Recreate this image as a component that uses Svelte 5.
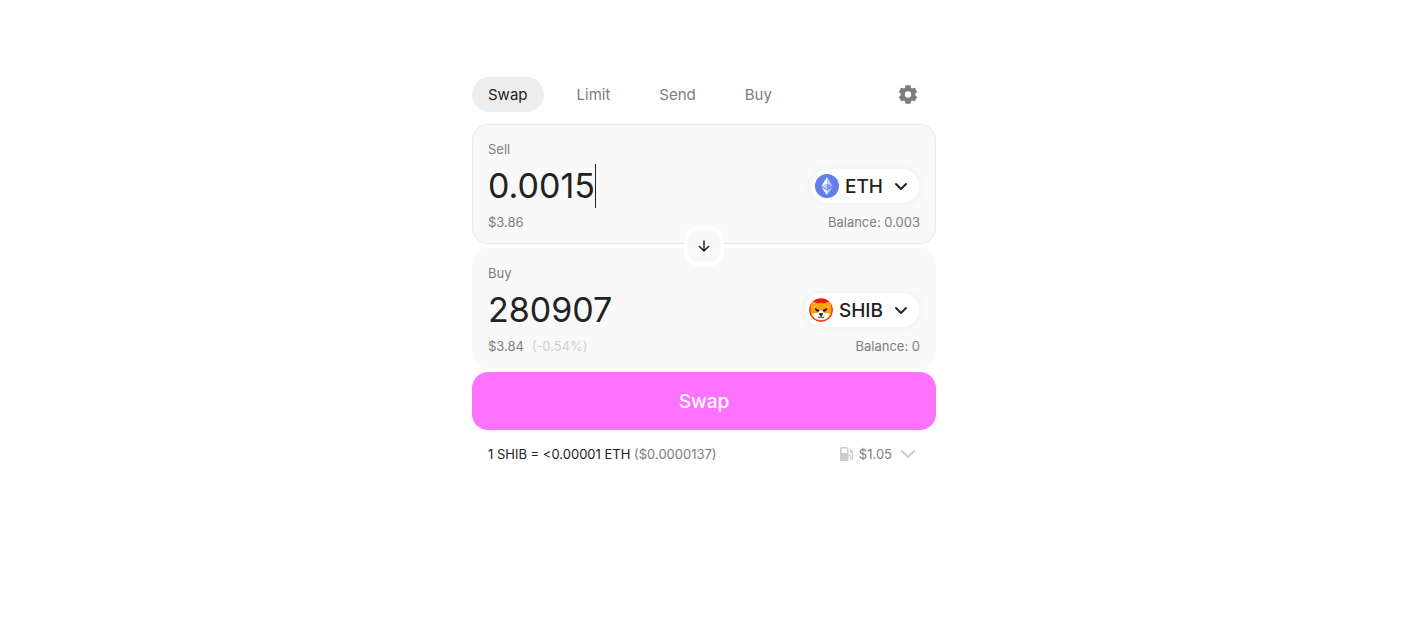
<script>
  const tabs = ['Swap', 'Limit', 'Send', 'Buy'];

  let active = 'Swap';
  let sell = '0.0015';
  let buy = '280907';
</script>

<main>
  <header>
    <nav>
      {#each tabs as tab}
        <button class="tab" class:active={tab === active} on:click={() => (active = tab)}>
          {tab}
        </button>
      {/each}
    </nav>
    <button class="settings" aria-label="Settings">
      <svg width="20" height="20" viewBox="0 0 20 20" fill="#7d7d7d">
        <path
          fill-rule="evenodd"
          d="M8 .3h4q.6 0 .7.600l.4 2q.5.200 1 .6l1.900-.7q.6-.2.900.3l2 3.400q.3.500-.2.900L17.200 8.700v1.600l1.500 1.300q.5.400.2.900l-2 3.400q-.3.500-.9.300l-1.900-.7q-.5.400-1 .6l-.4 2q-.1.600-.7.600H8q-.6 0-.7-.6l-.4-2q-.5-.2-1-.6l-1.900.7q-.6.200-.9-.3l-2-3.400q-.3-.5.200-.9l1.500-1.300V8.700L1.300 7.400q-.5-.4-.2-.9l2-3.400q.3-.5.9-.3l1.900.7q.5-.4 1-.6l.4-2q.1-.6.7-.6ZM10 6.300a3.200 3.200 0 1 0 0 6.400 3.200 3.200 0 0 0 0-6.400Z"
        />
      </svg>
    </button>
  </header>

  <section class="card focused">
    <label for="sell">Sell</label>
    <div class="amount">
      <div class="field">
        <input id="sell" type="text" inputmode="decimal" size="6" bind:value={sell} />
        <span class="caret"></span>
      </div>
      <button class="token">
        <svg width="24" height="24" viewBox="0 0 24 24">
          <circle cx="12" cy="12" r="12" fill="#627eea" />
          <path d="M12 3v6.700l5.600 2.500Z" fill="#fff" fill-opacity=".6" />
          <path d="M12 3 6.400 12.200 12 9.700Z" fill="#fff" />
          <path d="M12 16.500V21l5.600-7.800Z" fill="#fff" fill-opacity=".6" />
          <path d="M12 21v-4.500l-5.600-3.300Z" fill="#fff" />
          <path d="m12 15.400 5.600-3.200L12 9.700Z" fill="#fff" fill-opacity=".2" />
          <path d="m6.400 12.200 5.600 3.200V9.700Z" fill="#fff" fill-opacity=".6" />
        </svg>
        <span>ETH</span>
        <svg width="24" height="24" viewBox="0 0 24 24">
          <path d="m7 10 5 5 5-5" fill="none" stroke="#222" stroke-width="2" stroke-linecap="round" stroke-linejoin="round" />
        </svg>
      </button>
    </div>
    <div class="info">
      <span>$3.86</span>
      <span>Balance: 0.003</span>
    </div>
  </section>

  <div class="divider">
    <button class="switch" aria-label="Switch tokens">
      <svg width="16" height="16" viewBox="0 0 16 16">
        <path d="M8 3v10M3.500 8.500 8 13l4.500-4.500" fill="none" stroke="#222" stroke-width="1.500" stroke-linecap="round" stroke-linejoin="round" />
      </svg>
    </button>
  </div>

  <section class="card">
    <label for="buy">Buy</label>
    <div class="amount">
      <div class="field">
        <input id="buy" type="text" inputmode="decimal" size="6" bind:value={buy} />
      </div>
      <button class="token">
        <svg width="24" height="24" viewBox="0 0 24 24">
          <circle cx="12" cy="12" r="11.800" fill="#f51a0a" />
          <path d="M2.800 4Q6 3.600 8.300 5.200q3.700-.8 7.400 0Q18 3.600 21.200 4q1.400 2.700 1.200 5.500.8 3.500-.7 7.500-3 5.500-9.700 5.500T2.300 17Q.8 13 1.600 9.500 1.400 6.700 2.800 4Z" fill="#ffa30f" />
          <path d="M3 16q2.500-1.200 5-.8 1.800-.5 2.500-2.700 1.500-.6 3 0 .7 2.200 2.500 2.700 2.500-.4 5 .8-1 2.400-3 4.200Q15.300 22 12 22t-6-1.800Q4 18.400 3 16Z" fill="#fff" />
          <path d="M3.600 10.200q1.400-1.200 3.600-.8L5.600 8.200q-1.400.4-2 2ZM20.400 10.200q-1.400-1.200-3.600-.8l1.600-1.200q1.400.4 2 2Z" fill="#fff" fill-opacity=".6" />
          <path d="m5.600 10 4.800 2q-.3 1.900-1.800 1.700-2.200-.3-3-3.700ZM18.400 10l-4.800 2q.3 1.900 1.800 1.700 2.200-.3 3-3.700Z" fill="#161616" />
          <path d="M9.900 15.200h4.200l-.7 2-1.400.8-1.400-.8Z" fill="#111" />
          <path d="M12 17v2m-3.200 0q1.700 1.200 3.200 0 1.500 1.200 3.200 0" fill="none" stroke="#222" stroke-width=".9" />
        </svg>
        <span>SHIB</span>
        <svg width="24" height="24" viewBox="0 0 24 24">
          <path d="m7 10 5 5 5-5" fill="none" stroke="#222" stroke-width="2" stroke-linecap="round" stroke-linejoin="round" />
        </svg>
      </button>
    </div>
    <div class="info">
      <span>$3.84 <span class="impact">(-0.54%)</span></span>
      <span>Balance: 0</span>
    </div>
  </section>

  <button class="submit">Swap</button>

  <footer>
    <p>1 SHIB = &lt;0.00001 ETH <span>($0.0000137)</span></p>
    <button class="gas">
      <svg width="16" height="16" viewBox="0 0 16 16" fill="#cecece">
        <path fill-rule="evenodd" d="M3 1h4.500q2 0 2 2v12H1V3q0-2 2-2Zm0 1.500q-.5 0-.5.5v4H8V3q0-.5-.5-.5Z" />
        <path d="M9.500 9h1q1 0 1 1v2.200q0 1 1 1t1-1V6.300L11 3.200M11.500 3.800v2q0 1.200 1.200 1.200h.8" fill="none" stroke="#cecece" stroke-width="1.200" stroke-linecap="round" />
      </svg>
      <span>$1.05</span>
      <svg class="chevron" width="20" height="20" viewBox="0 0 20 20">
        <path d="m4 7 6 6 6-6" fill="none" stroke="#cecece" stroke-width="2" stroke-linecap="round" stroke-linejoin="round" />
      </svg>
    </button>
  </footer>
</main>

<style>
  :global(body) {
    margin: 0;
    padding-right: 14px;
    background: #fefefe;
    font-family: Inter, 'Liberation Sans', sans-serif;
    color: #222;
  }
  main {
    display: flex;
    flex-direction: column;
    box-sizing: border-box;
    max-width: 480px;
    margin: 0 auto;
    padding: 77px 8px 24px;
  }
  button {
    padding: 0;
    border: none;
    background: none;
    font-family: inherit;
    color: inherit;
    cursor: pointer;
  }
  svg {
    display: block;
    flex: none;
  }
  header {
    display: flex;
    align-items: center;
    justify-content: space-between;
    padding-right: 18px;
    margin-bottom: 12px;
  }
  nav {
    display: flex;
    gap: 17px;
  }
  .tab {
    height: 35px;
    padding: 0 16px;
    border-radius: 18px;
    font-size: 15px;
    color: #7d7d7d;
  }
  .tab.active {
    background: #eee;
    color: #222;
  }
  .card {
    display: flex;
    flex-direction: column;
    padding: 15px 15px 12px;
    border: 1px solid #f9f9f9;
    border-radius: 16px;
    background: #f9f9f9;
  }
  .card.focused {
    border-color: #e8e8f2;
  }
  label,
  .info {
    font-size: 13px;
    line-height: 18px;
    color: #7d7d7d;
  }
  .amount {
    display: flex;
    align-items: center;
    justify-content: space-between;
    height: 44px;
    margin: 6px 0 5px;
  }
  .field {
    display: flex;
    align-items: center;
    min-width: 0;
  }
  input {
    field-sizing: content;
    min-width: 0;
    padding: 0;
    border: none;
    outline: none;
    background: none;
    font-family: inherit;
    font-size: 34px;
    line-height: 44px;
    color: #222;
  }
  .caret {
    width: 1px;
    height: 44px;
    background: #222;
  }
  .token {
    display: flex;
    align-items: center;
    gap: 6px;
    height: 36px;
    padding: 0 6px 0 4px;
    border: 1px solid #f4f4f4;
    border-radius: 18px;
    background: #fff;
    box-shadow: 0 0 10px rgba(34, 34, 34, 0.04);
    font-size: 19px;
    font-weight: 500;
  }
  .info {
    display: flex;
    justify-content: space-between;
  }
  .impact {
    margin-left: 4px;
    color: #cecece;
  }
  .divider {
    display: flex;
    align-items: center;
    justify-content: center;
    height: 4px;
    z-index: 2;
  }
  .switch {
    display: flex;
    align-items: center;
    justify-content: center;
    flex: none;
    width: 40px;
    height: 40px;
    border: 4px solid #fff;
    border-radius: 14px;
    background: #f9f9f9;
  }
  .submit {
    height: 58px;
    margin-top: 4px;
    border-radius: 16px;
    background: #ff72ff;
    font-size: 19px;
    font-weight: 500;
    color: #fff;
  }
  footer {
    display: flex;
    align-items: center;
    justify-content: space-between;
    padding: 14px 18px 0 16px;
    font-size: 13px;
    line-height: 20px;
  }
  p {
    margin: 0;
  }
  p span,
  .gas {
    color: #7d7d7d;
  }
  .gas {
    display: flex;
    align-items: center;
    gap: 4px;
    font-size: 13px;
  }
  .gas .chevron {
    margin-left: 2px;
  }
</style>
